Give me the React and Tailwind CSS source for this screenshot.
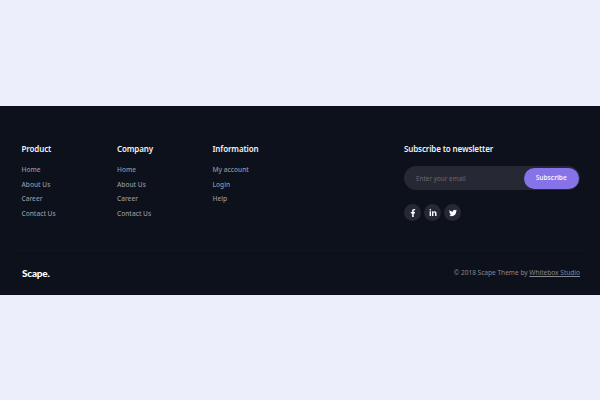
import { FaFacebookF, FaLinkedinIn, FaTwitter } from "react-icons/fa";

const columns = [
  { title: "Product", links: ["Home", "About Us", "Career", "Contact Us"] },
  { title: "Company", links: ["Home", "About Us", "Career", "Contact Us"] },
  { title: "Information", links: ["My account", "Login", "Help"] },
];

const socials = [
  { name: "Facebook", Icon: FaFacebookF },
  { name: "LinkedIn", Icon: FaLinkedinIn },
  { name: "Twitter", Icon: FaTwitter },
];

function LinkColumn({ title, links }) {
  return (
    <div className="w-[95.5px]">
      <h3 className="text-[8px] leading-3 font-semibold tracking-[-0.12px] text-[#f0f1f5]">{title}</h3>
      <ul className="mt-2">
        {links.map((link) => (
          <li key={link} className="h-[14.6px] text-[6.6px] leading-[14.6px] font-medium text-[#94969f]">
            <a href="#">{link}</a>
          </li>
        ))}
      </ul>
    </div>
  );
}

export default function App() {
  return (
    <div className="flex h-[400px] w-[600px] flex-col overflow-hidden bg-[#eceefb] pt-[106px] font-['Noto_Sans',sans-serif]">
      <footer className="flex h-[189px] flex-col bg-[#0d111c]">
        <div className="flex h-36 pt-[37px] pr-[20px] pl-[21.5px]">
          {columns.map((column) => (
            <LinkColumn key={column.title} {...column} />
          ))}
          <section className="ml-auto w-44">
            <h3 className="text-[8px] leading-3 font-semibold tracking-[-0.13px] text-[#f0f1f5]">Subscribe to newsletter</h3>
            <form className="mt-[11px] flex h-6 items-center rounded-full bg-[#262834] pr-[1px] pl-3">
              <input
                type="email"
                placeholder="Enter your email"
                className="mt-px w-0 flex-1 bg-transparent text-[6.4px] outline-none placeholder:text-[#666873]"
              />
              <button type="button" className="h-[21px] w-[55.5px] rounded-full bg-[#8673e7] text-[6.6px] font-semibold text-[#f3f0ff]">
                Subscribe
              </button>
            </form>
            <div className="mt-[14px] flex gap-[3px]">
              {socials.map(({ name, Icon }) => (
                <a key={name} href="#" aria-label={name} className="flex size-[17px] items-center justify-center rounded-full bg-[#262834] text-white">
                  <Icon className="size-2" />
                </a>
              ))}
            </div>
          </section>
        </div>
        <div className="mx-[15px] flex h-[45px] items-center justify-between border-t border-[#11151f] pr-[5px] pl-[7px]">
          <span className="font-['Lato'] text-[10px] leading-3 font-black tracking-[-0.2px] text-white">Scape.</span>
          <p className="text-[6.6px] tracking-[-0.02px] text-[#858791]">
            © 2018 Scape Theme by <a href="#" className="underline">Whitebox Studio</a>
          </p>
        </div>
      </footer>
    </div>
  );
}
